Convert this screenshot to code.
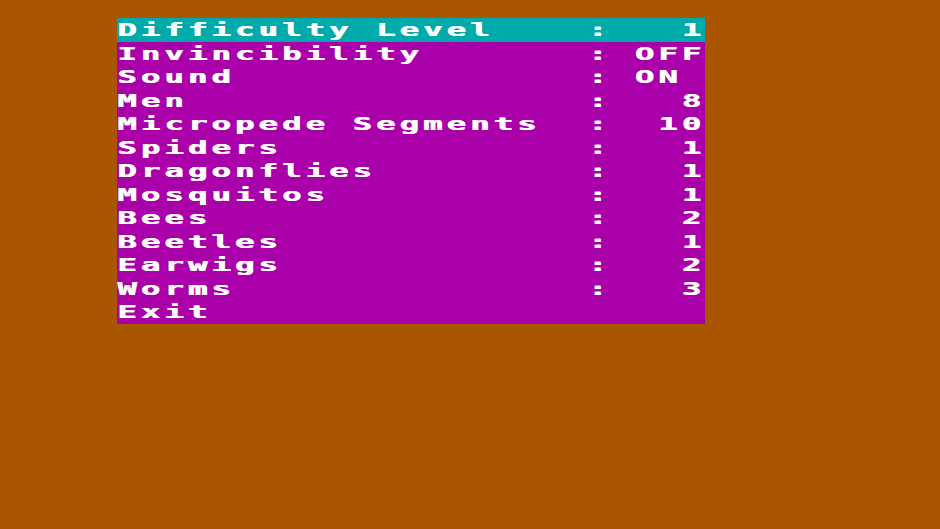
const options = [
  ['Difficulty Level', '1'],
  ['Invincibility', 'OFF'],
  ['Sound', 'ON '],
  ['Men', '8'],
  ['Micropede Segments', '10'],
  ['Spiders', '1'],
  ['Dragonflies', '1'],
  ['Mosquitos', '1'],
  ['Bees', '2'],
  ['Beetles', '1'],
  ['Earwigs', '2'],
  ['Worms', '3'],
];

// 25 text columns: label, colon at column 20, value right-aligned in the last 4
function line(label, value) {
  if (value === undefined) return label.padEnd(25, ' ');
  return label.padEnd(20, ' ') + ':' + value.padStart(4, ' ');
}

function Row({ text, selected }) {
  return (
    <div className={`h-[23.5px] ${selected ? 'bg-[#00aaaa]' : ''}`}>
      <span
        className="inline-block origin-left scale-x-[1.8] whitespace-pre font-bold text-[18px] leading-[23.5px] tracking-[2.23px] text-white [text-shadow:0.6px_0_0_#fff]"
        style={{ fontFamily: '"DejaVu Sans Mono", "Liberation Mono", monospace' }}
      >
        {text}
      </span>
    </div>
  );
}

export default function App() {
  return (
    <div className="w-[940px] h-[529px] bg-[#aa5500] pt-[18px] pl-[117px]">
      <div className="w-[588px] bg-[#aa00aa]">
        {options.map(([label, value], i) => (
          <Row key={label} text={line(label, value)} selected={i === 0} />
        ))}
        <Row text={line('Exit')} />
      </div>
    </div>
  );
}
